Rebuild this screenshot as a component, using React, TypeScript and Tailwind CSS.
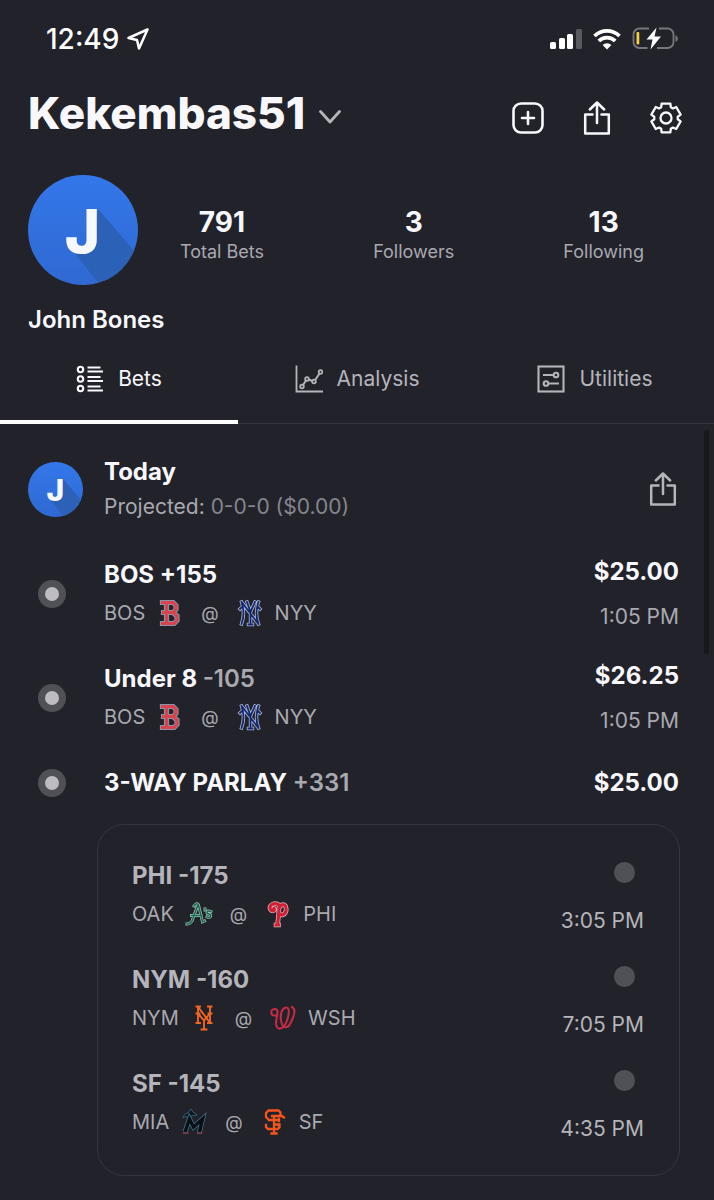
import type { ReactNode } from 'react';

type Team = { code: string; logo: ReactNode };
type Bet = { title: string; odds?: string; away: Team; home: Team; stake: string; time: string };
type Leg = { title: string; away: Team; home: Team; time: string };

// Six-toothed cog outline, centred on 16,16
const gearPoints = Array.from({ length: 6 }, (_, i) => {
  const base = i * 60 - 90;
  return [
    [-24, 11.8],
    [-17, 15],
    [17, 15],
    [24, 11.8],
  ].map(([offset, radius]) => {
    const a = ((base + offset) * Math.PI) / 180;
    return `${(16 + radius * Math.cos(a)).toFixed(2)},${(16 + radius * Math.sin(a)).toFixed(2)}`;
  });
})
  .flat()
  .join(' ');

function ShareIcon() {
  return (
    <svg className="w-7 h-9" viewBox="0 0 28 36" fill="none" stroke="currentColor" strokeWidth="2.5" strokeLinecap="round" strokeLinejoin="round">
      <path d="M9.500 14.500H2.200V33.500H25.800V14.500H18.500" />
      <path d="M14 23V3M6.800 9.500L14 2.500L21.200 9.500" />
    </svg>
  );
}

function BetsIcon() {
  return (
    <svg className="w-7 h-7" viewBox="0 0 28 28" fill="none" stroke="currentColor" strokeWidth="2.100">
      {[4.5, 14, 23.5].map((y) => (
        <g key={y}>
          <circle cx="4.500" cy={y} r="2.700" />
          <path d={`M11.500 ${y - 2}H24.500M11.500 ${y + 2}H27`} strokeWidth="1.900" />
        </g>
      ))}
    </svg>
  );
}

function AnalysisIcon() {
  return (
    <svg className="w-7 h-7" viewBox="0 0 28 28" fill="none" stroke="currentColor" strokeWidth="1.800">
      <path d="M1.500 0.500V26.500H28" />
      <path d="M8 20L11 15.500M13.500 14.500L17.500 16M20.500 14.500L24.500 8.500" strokeWidth="2" />
      <circle cx="7" cy="21.500" r="1.800" />
      <circle cx="12" cy="14" r="1.800" />
      <circle cx="19" cy="16.500" r="1.800" />
      <circle cx="25.500" cy="7" r="1.800" />
    </svg>
  );
}

function UtilitiesIcon() {
  return (
    <svg className="w-7 h-7" viewBox="0 0 28 28" fill="none" stroke="currentColor" strokeWidth="2.100">
      <rect x="1.500" y="1.500" width="25" height="25" />
      <path d="M6 10H16.500M11.500 18.500H22" />
      <circle cx="19" cy="10" r="2.300" />
      <circle cx="9" cy="18.500" r="2.300" />
    </svg>
  );
}

// Team mark: one set of strokes, drawn over a wider copy of itself when it has an outline
function Mark({ d, color, width, outline, edge = 1.4 }: { d: string; color: string; width: number; outline?: string; edge?: number }) {
  return (
    <svg className="w-7 h-7 shrink-0" viewBox="0 0 28 28" fill="none" aria-hidden="true">
      {outline && <path d={d} stroke={outline} strokeWidth={width + edge} strokeLinecap="square" />}
      <path d={d} stroke={color} strokeWidth={width} strokeLinecap="square" />
    </svg>
  );
}

const RedSox = (
  <Mark
    d="M6.500 3.500H17L20 6.500V10.500L17 13.500L21 17V21.500L18 24.500H6.500M10.500 3.500V24.500M7.500 13.500H17"
    color="#d8434d"
    width={3.2}
    outline="#8795a8"
    edge={2}
  />
);

const Yankees = (
  <Mark
    d="M5.500 3Q9.500 14 5.500 25M6 3.500L22 24.500M22.500 3Q18.500 14 22.500 25M4 10L6 8M24 10L22 8M11 3L14.500 13L19 3M14.500 13V25.500M12.500 25.500H16.500"
    color="#14296b"
    width={1.8}
    outline="#a9b4d6"
    edge={1.6}
  />
);

const Athletics = (
  <Mark
    d="M9 6Q12 2 13.500 5L17.500 22L19.500 21M12.500 6L7 21Q5 24 2 24M6.500 15.500H16M20 9V10M26 11.500Q22 10 22 12.500Q22 14 24 14Q26.500 14.500 25.500 16.500Q24.500 18 22 17"
    color="#1c6650"
    width={1.5}
    outline="#9cc5b7"
    edge={1.4}
  />
);

const Phillies = (
  <Mark
    d="M15.500 5C14.500 12 14.500 19 13.500 24.500M12 25H14.500M15 8Q18.500 2.500 21.500 6Q23.500 12 19.500 14.500Q17 15.500 15.500 14M15.500 5.500C11 1.500 4 5 6.500 9.500C8.500 12 11.500 10.500 10 8.500"
    color="#cf2036"
    width={3.2}
    outline="#e6b5bc"
    edge={1.4}
  />
);

const Mets = (
  <Mark
    d="M8 2.500V19M6.500 2.500H10M6.500 19H10M20 2.500V19M18 2.500H21.500M18 19H21.500M8.500 3.500L19.500 18M6.500 9.500H9.500M18.500 9.500H21.500M8.500 10L14 16.500L19.500 10M14 16.500V25.500M11.500 25.500H16.500"
    color="#f26522"
    width={1.9}
  />
);

const Nationals = (
  <Mark
    d="M6 11.500C1 12 1 5 6 5C11 5 7 14 7 19C7 28 15 25.500 18 16.500C21 8 20 3 17 3.500C13 4 11 10 12 16C13 25 19 26 22.500 17C26 10 26.500 5 23 3"
    color="#c42b47"
    width={2.1}
  />
);

const Marlins = (
  <svg className="w-7 h-7 shrink-0" viewBox="0 0 28 28" fill="none" aria-hidden="true">
    <path d="M3 10Q4 5 8 5L11 1Q12 4 17 7L11 8L8 11L6 8Z" fill="#10141c" stroke="#2c6377" />
    <path d="M5 24L9.500 11L13.500 19L22.500 11L19.500 24" stroke="#3f7288" strokeWidth="5" />
    <path d="M3 25H8.500M17 25H22.500" stroke="#93475a" strokeWidth="1.500" />
    <path d="M5 24L9.500 11L13.500 19L22.500 11L19.500 24" stroke="#0a0e15" strokeWidth="3.400" />
  </svg>
);

const Giants = (
  <Mark
    d="M20.500 7V4.500L18.500 2.500H8.500L6 5V9L8.500 11.500M17.500 16.500L19.500 18V19.500L17.500 21H8L6 19V17M9 12H18.500M12 8H22L24 9.500M14 8V25.500M11.500 25.500H16.500M14 16.500H19.500M19 11V13"
    color="#f5541d"
    width={2.3}
  />
);

const teams: Record<string, Team> = {
  bos: { code: 'BOS', logo: RedSox },
  nyy: { code: 'NYY', logo: Yankees },
  oak: { code: 'OAK', logo: Athletics },
  phi: { code: 'PHI', logo: Phillies },
  nym: { code: 'NYM', logo: Mets },
  wsh: { code: 'WSH', logo: Nationals },
  mia: { code: 'MIA', logo: Marlins },
  sf: { code: 'SF', logo: Giants },
};

const stats = [
  { value: '791', label: 'Total Bets' },
  { value: '3', label: 'Followers' },
  { value: '13', label: 'Following' },
];

const tabs = [
  { label: 'Bets', icon: <BetsIcon />, active: true },
  { label: 'Analysis', icon: <AnalysisIcon />, active: false },
  { label: 'Utilities', icon: <UtilitiesIcon />, active: false },
];

const bets: Bet[] = [
  { title: 'BOS +155', away: teams.bos, home: teams.nyy, stake: '$25.00', time: '1:05 PM' },
  { title: 'Under 8', odds: '-105', away: teams.bos, home: teams.nyy, stake: '$26.25', time: '1:05 PM' },
];

const legs: Leg[] = [
  { title: 'PHI -175', away: teams.oak, home: teams.phi, time: '3:05 PM' },
  { title: 'NYM -160', away: teams.nym, home: teams.wsh, time: '7:05 PM' },
  { title: 'SF -145', away: teams.mia, home: teams.sf, time: '4:35 PM' },
];

function StatusBar() {
  return (
    <div className="flex items-center justify-between h-[78px] pl-[46px] pr-9">
      <div className="flex items-center gap-2 text-white">
        <span className="text-[28px] font-medium">12:49</span>
        <svg className="w-[22px] h-[22px]" viewBox="0 0 22 22" fill="none" stroke="currentColor" strokeWidth="2.500" strokeLinejoin="round">
          <path d="M20.500 1.500L1.500 10L10 12L12 20.500Z" />
        </svg>
      </div>
      <div className="flex items-center gap-[11px] text-white">
        <svg className="w-8 h-[21px]" viewBox="0 0 32 21" fill="currentColor">
          <rect x="0" y="13" width="6" height="7" rx="1.500" />
          <rect x="9" y="9" width="6" height="11" rx="1.500" />
          <rect x="17" y="5" width="6" height="15" rx="1.500" />
          <rect x="26" y="0" width="6" height="20" rx="1.500" opacity="0.25" />
        </svg>
        <svg className="w-7 h-[21px]" viewBox="0 0 28 21" fill="none" stroke="currentColor" strokeWidth="3.800">
          <path d="M1.500 7A18 18 0 0 1 26.500 7" />
          <path d="M5.800 12A11.500 11.500 0 0 1 22.200 12" />
          <path d="M14 20.500L9.600 16A6.500 6.500 0 0 1 18.400 16Z" fill="currentColor" stroke="none" />
        </svg>
        <svg className="w-[46px] h-[24px]" viewBox="0 0 46 24">
          <path d="M17 1.500H7.500A6 6 0 0 0 1.500 7.500V15A6 6 0 0 0 7.500 21H15.500M27 1.500H35.500A6 6 0 0 1 41.500 7.500V15A6 6 0 0 1 35.500 21H25" fill="none" stroke="#76767c" strokeWidth="1.800" />
          <path d="M43.500 8Q46 9.500 46 11.500Q46 13.500 43.500 15Z" fill="#76767c" />
          <rect x="4.500" y="5" width="2.800" height="12.500" rx="1" fill="#f5cf3c" />
          <path d="M24.500 0.500L14.500 12.500H20.500L18.500 22.500L29 9.500H22.500Z" fill="white" />
        </svg>
      </div>
    </div>
  );
}

function Avatar({ small = false }: { small?: boolean }) {
  return (
    <svg className={`shrink-0 ${small ? 'w-[55px] h-[55px]' : 'w-[110px] h-[110px]'}`} viewBox="0 0 110 110" role="img" aria-label="John Bones">
      <defs>
        <linearGradient id="avatar-fill" x1="0" y1="0" x2="0" y2="1">
          <stop offset="0" stopColor="#3377ea" />
          <stop offset="1" stopColor="#3069d2" />
        </linearGradient>
        <clipPath id="avatar-clip">
          <circle cx="55" cy="55" r="55" />
        </clipPath>
      </defs>
      <circle cx="55" cy="55" r="55" fill="url(#avatar-fill)" />
      <path d="M70 34L120 92V124H83L42 72L66 68Z" fill="#2b61b6" clipPath="url(#avatar-clip)" />
      <text x="54.500" y="78" textAnchor="middle" fontSize="60" fill="#f8f9ff" className="font-['Inter',sans-serif] font-extrabold">J</text>
    </svg>
  );
}

function Matchup({ away, home }: { away: Team; home: Team }) {
  return (
    <div className="flex items-center h-[38px] text-[20px] text-[#a9a9b0]">
      <span className="mr-[11px]">{away.code}</span>
      {away.logo}
      <span className="mx-[17px] text-[18px]">@</span>
      {home.logo}
      <span className="ml-[11px]">{home.code}</span>
    </div>
  );
}

function PendingDot() {
  return (
    <span className="flex items-center justify-center w-7 h-7 mx-[38px] rounded-full bg-[#505057] shrink-0">
      <span className="w-3.5 h-3.5 rounded-full bg-[#bcbcc1]" />
    </span>
  );
}

function BetRow({ bet }: { bet: Bet }) {
  return (
    <li className="flex items-center h-[76px] pr-[35px]">
      <PendingDot />
      <div className="flex-1">
        <h3 className="text-[24px] leading-[38px] font-bold text-[#f8f8fc]">
          {bet.title} {bet.odds && <span className="font-semibold text-[#a9a9b0]">{bet.odds}</span>}
        </h3>
        <Matchup away={bet.away} home={bet.home} />
      </div>
      <div className="flex flex-col items-end gap-[21px] leading-6">
        <span className="text-[24px] leading-6 font-bold text-[#f8f8fc]">{bet.stake}</span>
        <span className="text-[21px] leading-6 text-[#a9a9b0]">{bet.time}</span>
      </div>
    </li>
  );
}

function LegRow({ leg }: { leg: Leg }) {
  return (
    <li className="flex items-end justify-between h-[76px]">
      <div>
        <h4 className="text-[24px] leading-[38px] font-bold text-[#b4b4ba]">{leg.title}</h4>
        <Matchup away={leg.away} home={leg.home} />
      </div>
      <div className="flex flex-col items-end gap-[26px]">
        <span className="w-[21px] h-[21px] mr-[9px] rounded-full bg-[#505057]" />
        <span className="text-[21px] leading-6 text-[#b4b4ba]">{leg.time}</span>
      </div>
    </li>
  );
}

export default function App() {
  return (
    <div className="relative min-h-screen bg-[#22222a] font-['Inter',sans-serif]">
      <StatusBar />

      <header className="flex items-center justify-between h-20 pl-7 pr-8 text-[#f8f8fc]">
        <button className="flex items-center gap-3.5 pb-2.5">
          <h1 className="text-[44px] leading-[48px] font-extrabold">Kekembas51</h1>
          <svg className="w-[22px] h-3.5 mt-2 text-[#b4b4ba]" viewBox="0 0 22 14" fill="none" stroke="currentColor" strokeWidth="2.800" strokeLinecap="round" strokeLinejoin="round">
            <path d="M1.500 1.500L11 12L20.500 1.500" />
          </svg>
        </button>
        <div className="flex items-center gap-[39px]">
          <button aria-label="Add bet">
            <svg className="w-8 h-8" viewBox="0 0 32 32" fill="none" stroke="currentColor" strokeWidth="2.600" strokeLinecap="round">
              <rect x="1.500" y="1.500" width="29" height="29" rx="7.500" />
              <path d="M16 10V22M10 16H22" />
            </svg>
          </button>
          <button aria-label="Share profile">
            <ShareIcon />
          </button>
          <button aria-label="Settings">
            <svg className="w-8 h-8" viewBox="0 0 32 32" fill="none" stroke="currentColor" strokeWidth="2.300" strokeLinejoin="round">
              <polygon points={gearPoints} />
              <circle cx="16" cy="16" r="5.500" />
            </svg>
          </button>
        </div>
      </header>

      <section className="px-7 pt-[17px]">
        <div className="flex items-center">
          <Avatar />
          <dl className="flex flex-1 justify-between mx-[42px] mt-2.5">
            {stats.map((s) => (
              <div key={s.label} className="flex flex-col-reverse items-center">
                <dt className="text-[18px] leading-[26px] text-[#a9a9b0]">{s.label}</dt>
                <dd className="text-[28px] leading-[34px] font-bold text-[#f8f8fc]">{s.value}</dd>
              </div>
            ))}
          </dl>
        </div>
        <h2 className="mt-[21px] text-[24px] leading-7 font-semibold text-[#f8f8fc]">John Bones</h2>
      </section>

      <nav className="grid grid-cols-3 h-[90px] border-b border-[#36363e]" role="tablist">
        {tabs.map((t) => (
          <button
            key={t.label}
            role="tab"
            aria-selected={t.active}
            className={`flex items-center justify-center gap-3.5 -mb-px pt-1 border-b-4 text-[21px] ${
              t.active ? 'border-white text-[#f8f8fc]' : 'border-transparent text-[#b4b4ba]'
            }`}
          >
            {t.icon}
            {t.label}
          </button>
        ))}
      </nav>

      <main className="relative pt-[30px] pb-6">
        <div className="flex items-center h-[70px] pl-7 pr-[37px]">
          <Avatar small />
          <div className="flex-1 ml-[21px]">
            <h2 className="text-[24px] leading-[35px] font-bold text-[#f8f8fc]">Today</h2>
            <p className="text-[21px] leading-[35px] text-[#a9a9b0]">
              Projected: <span className="text-[#85858d]">0-0-0 ($0.00)</span>
            </p>
          </div>
          <button className="text-[#b4b4ba]" aria-label="Share today's bets">
            <ShareIcon />
          </button>
        </div>

        <ul className="flex flex-col gap-7 mt-8">
          {bets.map((bet) => (
            <BetRow key={bet.title} bet={bet} />
          ))}
          <li>
            <div className="flex items-center h-[38px] pr-[35px]">
              <PendingDot />
              <h3 className="flex-1 text-[24px] font-bold text-[#f8f8fc]">
                3-WAY PARLAY <span className="font-semibold text-[#a9a9b0]">+331</span>
              </h3>
              <span className="text-[24px] font-bold text-[#f8f8fc]">$25.00</span>
            </div>
            <ul className="flex flex-col gap-7 mt-[22px] ml-[97px] mr-[34px] pt-8 pb-[34px] pl-[34px] pr-[35px] border border-[#36363e] rounded-[27px]">
              {legs.map((leg) => (
                <LegRow key={leg.title} leg={leg} />
              ))}
            </ul>
          </li>
        </ul>

        {/* scroll indicator */}
        <div className="absolute top-1.5 right-[5px] w-[5px] h-56 rounded-full bg-[#17171c]" />
      </main>
    </div>
  );
}
